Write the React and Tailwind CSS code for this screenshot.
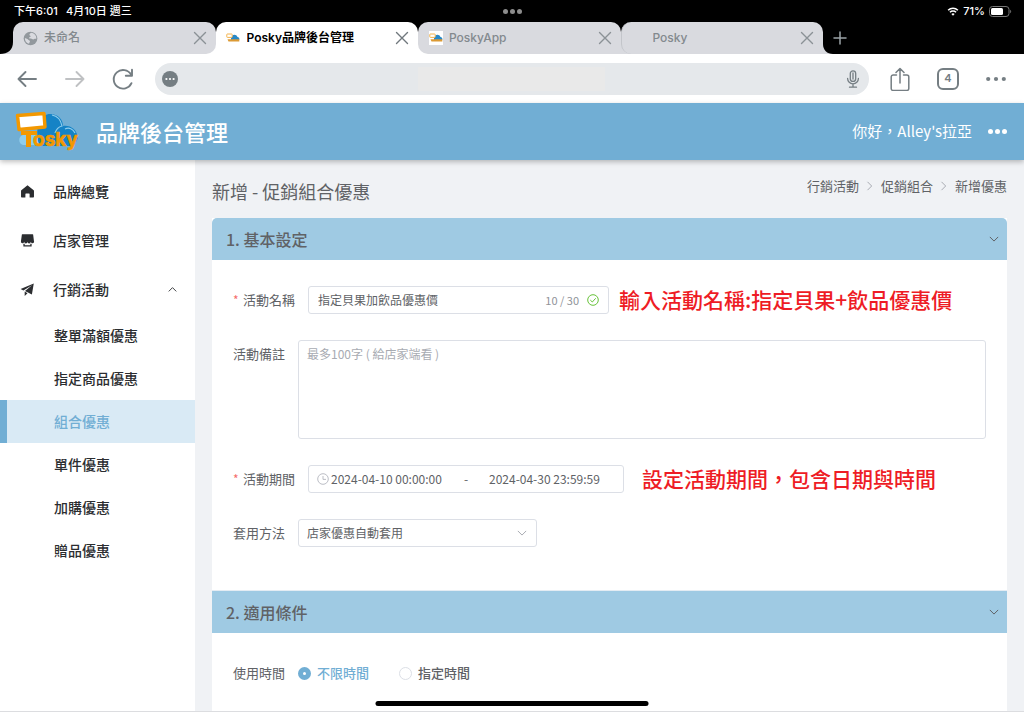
import { useState } from 'react';

const PROMO_ITEMS = [
  '整單滿額優惠',
  '指定商品優惠',
  '組合優惠',
  '單件優惠',
  '加購優惠',
  '贈品優惠',
];

const CRUMBS = ['行銷活動', '促銷組合', '新增優惠'];

function Chevron({ className, d = 'M1 3.5 6 8.5 11 3.5' }) {
  return (
    <svg viewBox="0 0 12 12" className={className} fill="none" stroke="currentColor" strokeWidth="1.2" aria-hidden="true">
      <path d={d} />
    </svg>
  );
}

function CloseIcon() {
  return (
    <svg viewBox="0 0 14 14" className="size-[14px]" fill="none" stroke="currentColor" strokeWidth="1.4" strokeLinecap="round">
      <path d="M1.5 1.5 12.5 12.5M12.5 1.5 1.5 12.5" />
    </svg>
  );
}

function GlobeIcon() {
  return (
    <svg viewBox="0 0 16 16" className="size-[15px]">
      <circle cx="8" cy="8" r="7.3" fill="#92989d" />
      <path d="M8.6 1.9c-.9.8-2 1.3-1.7 2.3.3.8 1.4.5 1.3 1.5-.1.9-1.5.7-1.7 1.7-.1.6.9.6 1.8.6 1.3 0 1.6 1 2.6 1 .9 0 1.1-.7 2.3-.7.4 0 1-.1 1.1-.4A6 6 0 0 0 8.6 1.9z" fill="#d9dadf" />
      <path d="M2 7.7c1.3 0 2.6.7 3.6 1.5.9.7 1.9.8 1.8 1.9-.1.9-.9 1.1-.9 2.6A6.2 6.2 0 0 1 2 7.7z" fill="#d9dadf" />
    </svg>
  );
}

// small version of the logo for the tabs
function Favicon() {
  return (
    <svg viewBox="0 0 14 14" className="size-[14px]">
      <path d="M0 0h14v14H0z" fill="#fff" />
      <path d="M5 7.5c0-4 5-5.5 6.5-1.5 2 0 2.5 3 1 3.5H5z" fill="#2788c8" />
      <rect x=".8" y="3" width="5.4" height="3.4" rx=".6" fill="#fff" stroke="#f3b24a" />
      <path d="M1.5 8.2h11.8v2.3H2.5z" fill="#dc9a34" />
    </svg>
  );
}

function Logo() {
  return (
    <svg viewBox="0 0 68 42" className="h-[42px] w-[68px]" role="img" aria-label="Posky">
      <path d="M9 34c-5-1-5-9 0-10 2-1 20-2 20-2l28 12z" fill="#8fcdec" />
      <path d="M24 30C21 12 28 3 36 3c8 0 13 5 13 12 8-1 14 4 15 12l-4 8H26z" fill="#1583c6" />
      <path d="M38 4c6 1 9 6 10 11-4 1-6 4-7 7M51 18c4-2 8 0 10 4" fill="none" stroke="#8fcdec" strokeWidth="1.2" />
      <path d="M7 20h16v4h-6v12h-5V24H7z" fill="#f39800" />
      <path d="M3.5 4.5 30 2.5 31 16 5 18.5z" fill="#fff" stroke="#f39800" strokeWidth="3.4" strokeLinejoin="round" />
      <text x="19" y="35" fontFamily="Inter, sans-serif" fontWeight="700" fontSize="19" fill="#f39800" stroke="#f39800" strokeWidth=".6">osky</text>
    </svg>
  );
}

function StatusBar() {
  return (
    <div className="grid h-[22px] grid-cols-3 items-center bg-black pr-3 pl-[14px] text-[11px] font-medium text-white">
      <div className="flex gap-2">
        <span>下午6:01</span>
        <span>4月10日 週三</span>
      </div>
      <div className="flex justify-center gap-[2px]">
        <i className="size-[5px] rounded-full bg-[#8d8d8d]" />
        <i className="size-[5px] rounded-full bg-[#8d8d8d]" />
        <i className="size-[5px] rounded-full bg-[#8d8d8d]" />
      </div>
      <div className="flex items-center justify-end gap-1">
        <svg viewBox="0 0 12 10" className="h-[9px] w-[12px]" fill="none" stroke="#fff" strokeWidth="1.7">
          <path d="M.6 3.6a7.6 7.6 0 0 1 10.8 0M2.6 5.9a4.8 4.8 0 0 1 6.8 0" />
          <path d="M6 9.8 4.2 7.9a2.6 2.6 0 0 1 3.6 0z" fill="#fff" stroke="none" />
        </svg>
        <span>71%</span>
        <svg viewBox="0 0 23 11" className="h-[11px] w-[23px]">
          <rect x=".5" y=".5" width="19.5" height="10" rx="3" fill="none" stroke="#777" />
          <rect x="2" y="2" width="12" height="7" rx="1.5" fill="#fff" />
          <path d="M21.2 3.8v3.4c1.3-.6 1.3-2.8 0-3.4z" fill="#777" />
        </svg>
      </div>
    </div>
  );
}

function Tab({ title, icon, active, wrap = '', className }) {
  return (
    <div className={`min-w-0 flex-1 ${wrap}`}>
      <div className={`flex h-8 items-center pr-[9px] pl-[10px] text-[12px] ${className}`}>
        <span className="mr-[6px] flex w-[15px] justify-center">{icon}</span>
        <span className="flex-1 truncate">{title}</span>
        <button aria-label={`關閉 ${title}`} className={active ? 'text-[#70787d]' : 'text-[#8b9196]'}>
          <CloseIcon />
        </button>
      </div>
    </div>
  );
}

function TabStrip() {
  return (
    <div className="flex h-8 bg-black">
      <svg viewBox="0 0 13 32" className="h-8 w-[13px]">
        <path d="M13 20v12H0c8 0 13-4 13-12z" fill="#d9dadf" />
      </svg>
      <div className="flex flex-1">
        <Tab
          title="未命名"
          icon={<GlobeIcon />}
          wrap="bg-linear-to-b from-black from-50% to-white to-50%"
          className="rounded-t-[10px] rounded-br-[10px] bg-[#d9dadf] font-medium text-[#83898e]"
        />
        <Tab title="Posky品牌後台管理" icon={<Favicon />} active className="rounded-t-[10px] bg-white font-semibold text-black" />
        <Tab
          title="PoskyApp"
          icon={<Favicon />}
          wrap="bg-linear-to-b from-black from-50% to-white to-50%"
          className="rounded-t-[10px] rounded-bl-[10px] bg-[#d9dadf] font-medium text-[#83898e]"
        />
        <Tab
          title="Posky"
          wrap="bg-linear-to-b from-black from-50% to-[#d9dadf] to-50%"
          className="rounded-t-[10px] rounded-bl-[10px] border-l border-[#c3c5ca] bg-[#d9dadf] font-medium text-[#83898e]"
        />
      </div>
      <div className="flex w-[201px] items-center">
        <svg viewBox="0 0 10 32" className="h-8 w-[10px]">
          <path d="M0 22v10h10C4 32 0 28 0 22z" fill="#d9dadf" />
        </svg>
        <button aria-label="新分頁" className="text-[#9aa2a7]">
          <svg viewBox="0 0 14 14" className="size-[14px]" fill="none" stroke="currentColor" strokeWidth="1.5" strokeLinecap="round">
            <path d="M7 1v12M1 7h12" />
          </svg>
        </button>
      </div>
    </div>
  );
}

function ToolButton({ label, className = 'text-[#757e83]', children }) {
  return (
    <button aria-label={label} className={`flex w-12 items-center justify-center ${className}`}>
      <svg viewBox="0 0 24 24" className="size-6" fill="none" stroke="currentColor" strokeWidth="1.9" strokeLinecap="round" strokeLinejoin="round">
        {children}
      </svg>
    </button>
  );
}

function Toolbar() {
  return (
    <div className="flex h-[49px] items-center bg-white pr-1 pl-[3px]">
      <ToolButton label="上一頁">
        <path d="M21 12H3.5M10.5 5l-7 7 7 7" />
      </ToolButton>
      <ToolButton label="下一頁" className="text-[#bfc1c3]">
        <path d="M3 12h17.5M13.500 5l7 7-7 7" />
      </ToolButton>
      <ToolButton label="重新載入">
        <path d="M20.5 16.2a9.3 9.3 0 1 1-.4-8.5" />
        <path d="M21 2.8v6h-6.2" />
      </ToolButton>
      <div className="mr-[7px] ml-2 flex h-8 flex-1 items-center justify-between rounded-full bg-[#e5e8eb] px-[7px] text-[#757e83]">
        <svg viewBox="0 0 16 16" className="size-4">
          <circle cx="8" cy="8" r="8" fill="currentColor" />
          <g fill="#fff">
            <circle cx="4.4" cy="8" r="1.1" />
            <circle cx="8" cy="8" r="1.1" />
            <circle cx="11.6" cy="8" r="1.1" />
          </g>
        </svg>
        <input type="text" aria-label="網址" className="h-6 w-[187px] bg-[#e9e9e9] outline-none" />
        <button aria-label="語音搜尋">
          <svg viewBox="0 0 18 18" className="size-[18px]" fill="none" stroke="currentColor" strokeWidth="1.3" strokeLinecap="round">
            <rect x="6.3" y=".9" width="5.4" height="10.5" rx="2.7" />
            <path d="M9 3v6M3.6 8.500a5.4 5.4 0 0 0 10.8 0M9 14v3M5.5 17.2h7" />
          </svg>
        </button>
      </div>
      <ToolButton label="分享">
        <path d="M8.5 8H5.200A2 2 0 0 0 3.2 10v11.5a2 2 0 0 0 2 2h13.6a2 2 0 0 0 2-2V10a2 2 0 0 0-2-2h-3.3M12 16V2M8 5.500 12 1.500l4 4" strokeWidth="1.5" />
      </ToolButton>
      <button aria-label="4 個分頁" className="flex w-12 justify-center text-[#757e83]">
        <span className="flex size-[22px] items-center justify-center rounded-[6px] border-2 border-current text-[11px] font-semibold">4</span>
      </button>
      <ToolButton label="更多">
        <g fill="currentColor" stroke="none">
          <circle cx="4.2" cy="12" r="2.1" />
          <circle cx="12" cy="12" r="2.1" />
          <circle cx="19.8" cy="12" r="2.1" />
        </g>
      </ToolButton>
    </div>
  );
}

function SiteHeader() {
  return (
    <header className="z-10 flex h-[57px] shrink-0 items-center bg-[#71aed4] pr-[17px] pl-[14px] text-white shadow-[0_2px_5px_rgba(0,0,0,0.25)]">
      <Logo />
      <h1 className="ml-[14px] flex-1 text-[22px] font-medium">品牌後台管理</h1>
      <span className="text-[15px]">你好，Alley's拉亞</span>
      <button aria-label="選單" className="ml-4 flex gap-[2px]">
        <i className="size-[5px] rounded-full bg-white" />
        <i className="size-[5px] rounded-full bg-white" />
        <i className="size-[5px] rounded-full bg-white" />
      </button>
    </header>
  );
}

function NavIcon({ d }) {
  return (
    <svg viewBox="0 0 1024 1024" className="mr-[18px] size-[15px]" fill="currentColor" aria-hidden="true">
      <path d={d} />
    </svg>
  );
}

function Sidebar() {
  return (
    <nav className="w-[195px] shrink-0 bg-white pt-[7px] text-[14px] font-medium text-[#2b2d30]">
      <a href="#overview" className="flex h-[49px] items-center pl-5">
        <NavIcon d="M512 90 90 430q-20 18-20 45v400q0 50 50 50h220q28 0 28-28V680q0-30 30-30h228q30 0 30 30v217q0 28 28 28h220q50 0 50-50V475q0-27-20-45z" />
        品牌總覽
      </a>
      <a href="#stores" className="flex h-[49px] items-center pl-5">
        <NavIcon d="M704 730h90v200H230V730h90v110h384V730zm248-178c4 8 8 16 8 24a112 112 0 0 1-224 24 112 112 0 0 1-224 0 112 112 0 0 1-224 0 112 112 0 0 1-224-24c0-8 2-16 4-24L128 108q4-30 34-30h700q30 0 34 30z" />
        店家管理
      </a>
      <button className="flex h-[49px] w-full items-center pr-[18px] pl-5">
        <NavIcon d="m40 480 900-380-128 760-470-250L840 200 230 580 40 480zm280 480V657l192 111-192 192z" />
        <span className="flex-1 text-left">行銷活動</span>
        <Chevron className="size-[9px]" d="M1 8.5 6 3.5 11 8.5" />
      </button>
      <ul>
        {PROMO_ITEMS.map((item) => (
          <li key={item}>
            <a
              href={`#${item}`}
              className={`flex h-[43px] items-center border-l-[7px] pl-[47px] ${
                item === '組合優惠' ? 'border-[#71aed4] bg-[#d9eaf5] text-[#71aed4]' : 'border-transparent'
              }`}
            >
              {item}
            </a>
          </li>
        ))}
      </ul>
    </nav>
  );
}

function SectionHeader({ title, className }) {
  return (
    <h3>
      <button className={`flex w-full items-center justify-between bg-[#9fcae3] pr-2 pl-[14px] text-left text-[#606266] ${className}`}>
        <span className="text-[16px] leading-5 font-medium">{title}</span>
        <Chevron className="size-[10px]" />
      </button>
    </h3>
  );
}

function Field({ label, htmlFor, required, children }) {
  return (
    <div className="flex items-start">
      <label htmlFor={htmlFor} className={`flex h-7 shrink-0 items-center text-[13px] ${required ? 'w-[75px]' : 'w-[65px]'}`}>
        {required && <span className="w-[10px] text-[12px] text-[#f56c6c]">*</span>}
        {label}
      </label>
      {children}
    </div>
  );
}

function Note({ className, children }) {
  return <p className={`text-[21px] leading-[26px] font-medium whitespace-nowrap text-[#ee1c25] ${className}`}>{children}</p>;
}

function App() {
  const [name, setName] = useState('指定貝果加飲品優惠價');
  const [start, setStart] = useState('2024-04-10 00:00:00');
  const [end, setEnd] = useState('2024-04-30 23:59:59');
  const [limit, setLimit] = useState('不限時間');

  return (
    <div className="relative flex h-screen flex-col overflow-hidden border-b border-[#dcdde0] font-['Noto_Sans_CJK_TC',sans-serif]">
      <div className="shrink-0 font-['Inter','Noto_Sans_CJK_TC',sans-serif]">
        <StatusBar />
        <TabStrip />
        <Toolbar />
      </div>
      <SiteHeader />
      <div className="flex min-h-0 flex-1">
        <Sidebar />
        <main className="min-w-0 flex-1 overflow-hidden bg-[#f0f2f5] px-[17px] text-[#606266]">
          <div className="flex h-[58px] items-start justify-between">
            <h2 className="pt-[18px] text-[18px] leading-[26px]">新增 - 促銷組合優惠</h2>
            <nav className="flex items-center gap-[6px] pt-4 text-[13px] leading-5">
              {CRUMBS.map((crumb, i) => (
                <span key={crumb} className="flex items-center gap-[6px]">
                  {i > 0 && <Chevron className="size-[10px] text-[#a8abb2]" d="M3 1 8 6 3 11" />}
                  <a href={`#${crumb}`}>{crumb}</a>
                </span>
              ))}
            </nav>
          </div>

          <section className="bg-white">
            <SectionHeader title="1. 基本設定" className="h-[42px] rounded-t-[5px]" />
            <form className="flex flex-col gap-[26px] px-[21px] pt-[26px] pb-[43px]">
              <Field label="活動名稱" htmlFor="name" required>
                <div className="flex h-7 w-[301px] items-center rounded-[3px] border border-[#dcdfe6] px-[9px]">
                  <input
                    id="name"
                    type="text"
                    maxLength={30}
                    value={name}
                    onChange={(e) => setName(e.target.value)}
                    className="min-w-0 flex-1 text-[12px] outline-none"
                  />
                  <span className="text-[11px] text-[#909399]">{name.length} / 30</span>
                  <svg viewBox="0 0 12 12" className="ml-2 size-3" fill="none" stroke="#67c23a">
                    <circle cx="6" cy="6" r="5.3" />
                    <path d="M3.3 6.1 5.3 8 8.7 4.3" />
                  </svg>
                </div>
                <Note className="ml-[10px]">輸入活動名稱:指定貝果+飲品優惠價</Note>
              </Field>
              <Field label="活動備註" htmlFor="memo">
                <textarea
                  id="memo"
                  placeholder="最多100字 ( 給店家端看 )"
                  className="h-[99px] flex-1 resize-none rounded-[3px] border border-[#dcdfe6] px-2 py-1 text-[12px] leading-[18px] outline-none placeholder:text-[#a8abb2]"
                />
              </Field>
              <Field label="活動期間" htmlFor="start" required>
                <div className="flex h-7 w-[316px] items-center rounded-[3px] border border-[#dcdfe6] pl-2 text-[12px]">
                  <svg viewBox="0 0 12 12" className="mr-[2px] size-3" fill="none" stroke="#b4b7be" strokeWidth=".9">
                    <circle cx="6" cy="6" r="5.3" />
                    <path d="M6 3v3.4h3" />
                  </svg>
                  <input
                    id="start"
                    type="text"
                    value={start}
                    onChange={(e) => setStart(e.target.value)}
                    className="w-[120px] outline-none"
                  />
                  <span className="w-[30px] text-center">-</span>
                  <input
                    type="text"
                    aria-label="結束時間"
                    value={end}
                    onChange={(e) => setEnd(e.target.value)}
                    className="ml-2 w-[120px] outline-none"
                  />
                </div>
                <Note className="ml-[18px]">設定活動期間，包含日期與時間</Note>
              </Field>
              <Field label="套用方法" htmlFor="method">
                <div className="relative w-[239px]">
                  <select
                    id="method"
                    className="h-7 w-full appearance-none rounded-[3px] border border-[#dcdfe6] bg-white px-2 text-[12px] outline-none"
                  >
                    <option>店家優惠自動套用</option>
                  </select>
                  <Chevron className="pointer-events-none absolute top-[9px] right-[10px] size-[10px] text-[#a8abb2]" />
                </div>
              </Field>
            </form>
          </section>

          <section className="bg-white pb-20">
            <SectionHeader title="2. 適用條件" className="h-[43px] border-t border-[#e4ecf3]" />
            <div role="radiogroup" aria-labelledby="limit-label" className="flex items-center px-[21px] pt-[26px] text-[13px] leading-7">
              <span id="limit-label" className="w-[65px]">使用時間</span>
              {['不限時間', '指定時間'].map((option) => (
                <label
                  key={option}
                  className={`mr-[30px] flex items-center gap-[6px] font-medium ${limit === option ? 'text-[#71aed4]' : ''}`}
                >
                  <input
                    type="radio"
                    name="limit"
                    checked={limit === option}
                    onChange={() => setLimit(option)}
                    className="size-[13px] appearance-none rounded-full border border-[#dcdfe6] bg-white checked:border-[5px] checked:border-[#71aed4]"
                  />
                  {option}
                </label>
              ))}
            </div>
          </section>
        </main>
      </div>
      <div className="absolute bottom-[5px] left-1/2 h-[5px] w-[273px] -translate-x-1/2 rounded-full bg-black" />
    </div>
  );
}

export default App;
